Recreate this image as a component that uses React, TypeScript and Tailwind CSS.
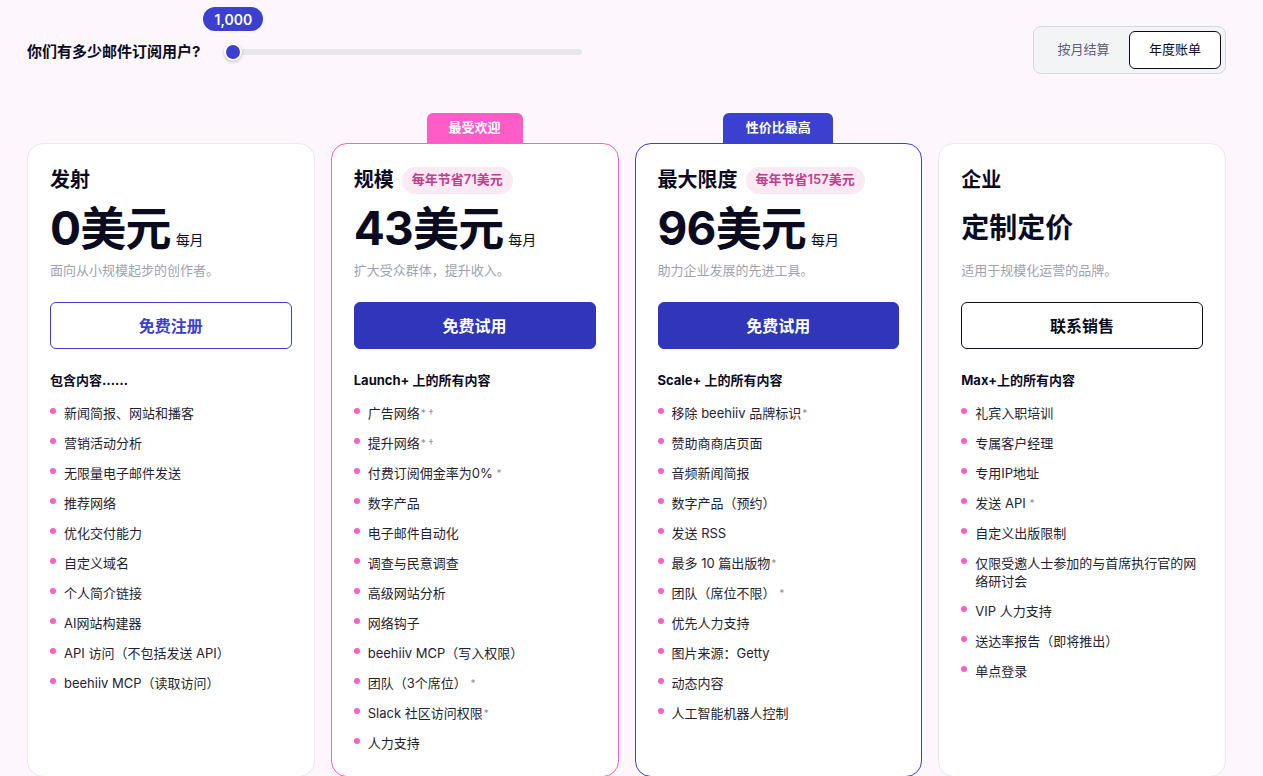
import React from "react";

type Item = { t: string; mark?: string };
type Plan = {
  name: string;
  pill?: string;
  price?: string;
  custom?: string;
  desc: string;
  cta: string;
  ctaStyle: "outline-blue" | "solid" | "outline-black";
  heading: string;
  items: Item[];
  badge?: { text: string; cls: string };
  border: string;
};

const plans: Plan[] = [
  {
    name: "发射",
    price: "0美元",
    desc: "面向从小规模起步的创作者。",
    cta: "免费注册",
    ctaStyle: "outline-blue",
    heading: "包含内容……",
    border: "border-[#ebe6ef]",
    items: [
      { t: "新闻简报、网站和播客" },
      { t: "营销活动分析" },
      { t: "无限量电子邮件发送" },
      { t: "推荐网络" },
      { t: "优化交付能力" },
      { t: "自定义域名" },
      { t: "个人简介链接" },
      { t: "AI网站构建器" },
      { t: "API 访问（不包括发送 API）" },
      { t: "beehiiv MCP（读取访问）" },
    ],
  },
  {
    name: "规模",
    pill: "每年节省71美元",
    price: "43美元",
    desc: "扩大受众群体，提升收入。",
    cta: "免费试用",
    ctaStyle: "solid",
    heading: "Launch+ 上的所有内容",
    border: "border-[#ff5fc8]",
    badge: { text: "最受欢迎", cls: "bg-[#ff5cc8] w-[96px]" },
    items: [
      { t: "广告网络", mark: "* †" },
      { t: "提升网络", mark: "* †" },
      { t: "付费订阅佣金率为0%", mark: " *" },
      { t: "数字产品" },
      { t: "电子邮件自动化" },
      { t: "调查与民意调查" },
      { t: "高级网站分析" },
      { t: "网络钩子" },
      { t: "beehiiv MCP（写入权限）" },
      { t: "团队（3个席位）", mark: " *" },
      { t: "Slack 社区访问权限", mark: "*" },
      { t: "人力支持" },
    ],
  },
  {
    name: "最大限度",
    pill: "每年节省157美元",
    price: "96美元",
    desc: "助力企业发展的先进工具。",
    cta: "免费试用",
    ctaStyle: "solid",
    heading: "Scale+ 上的所有内容",
    border: "border-[#3b40d0]",
    badge: { text: "性价比最高", cls: "bg-[#3b40d0] w-[110px]" },
    items: [
      { t: "移除 beehiiv 品牌标识", mark: "*" },
      { t: "赞助商商店页面" },
      { t: "音频新闻简报" },
      { t: "数字产品（预约）" },
      { t: "发送 RSS" },
      { t: "最多 10 篇出版物", mark: "*" },
      { t: "团队（席位不限）", mark: " *" },
      { t: "优先人力支持" },
      { t: "图片来源：Getty" },
      { t: "动态内容" },
      { t: "人工智能机器人控制" },
    ],
  },
  {
    name: "企业",
    custom: "定制定价",
    desc: "适用于规模化运营的品牌。",
    cta: "联系销售",
    ctaStyle: "outline-black",
    heading: "Max+上的所有内容",
    border: "border-[#ebe6ef]",
    items: [
      { t: "礼宾入职培训" },
      { t: "专属客户经理" },
      { t: "专用IP地址" },
      { t: "发送 API", mark: " *" },
      { t: "自定义出版限制" },
      { t: "仅限受邀人士参加的与首席执行官的网络研讨会" },
      { t: "VIP 人力支持" },
      { t: "送达率报告（即将推出）" },
      { t: "单点登录" },
    ],
  },
];

const font = {
  fontFamily: '"Inter", "Noto Sans CJK SC", sans-serif',
};

function Card({ p }: { p: Plan }) {
  const ctaCls =
    p.ctaStyle === "solid"
      ? "bg-[#3036b9] text-white border border-[#3036b9]"
      : p.ctaStyle === "outline-blue"
      ? "bg-white text-[#3b40d0] border border-[#3b40d0]"
      : "bg-white text-[#0b0b1f] border border-[#0b0b1f]";
  return (
    <div className="flex flex-col">
      <div className="h-[30px] flex justify-center items-end">
        {p.badge && (
          <div
            className={`${p.badge.cls} h-[30px] rounded-t-[6px] flex items-center justify-center text-white text-[13px] font-bold`}
          >
            {p.badge.text}
          </div>
        )}
      </div>
      <div
        className={`h-[634px] bg-white border ${p.border} rounded-[16px] px-[22px] pt-[22px]`}
      >
        <div className="h-[28px] flex items-center gap-[8px]">
          <div className="text-[20px] font-bold text-[#0b0b1f] leading-none">
            {p.name}
          </div>
          {p.pill && (
            <div className="h-[27px] px-[10px] rounded-full bg-[#fbe9f4] text-[#c23d90] text-[13px] font-semibold flex items-center">
              {p.pill}
            </div>
          )}
        </div>
        <div className="mt-[11px] h-[46px] flex items-end">
          {p.price ? (
            <>
              <span className="text-[46px] font-bold text-[#0b0b1f] leading-none tracking-[-0.8px]">
                {p.price}
              </span>
              <span className="text-[14px] text-[#0b0b1f] ml-[5px] mb-[4px] leading-none">
                每月
              </span>
            </>
          ) : (
            <span className="text-[28px] font-bold text-[#0b0b1f] leading-none self-center">
              {p.custom}
            </span>
          )}
        </div>
        <div className="mt-[9px] text-[13px] leading-5 text-[#9ca3af]">
          {p.desc}
        </div>
        <button
          className={`mt-[22px] w-full h-[47px] rounded-[6px] text-[16px] font-bold ${ctaCls}`}
        >
          {p.cta}
        </button>
        <div className="mt-[22px] text-[13px] font-bold leading-[18px] text-[#0b0b1f]">
          {p.heading}
        </div>
        <ul className="mt-[15px] flex flex-col gap-[12px]">
          {p.items.map((it, i) => (
            <li key={i} className="flex items-start gap-[8px]">
              <span className="mt-[4px] w-[6px] h-[6px] rounded-full bg-[#ff5fc8] shrink-0" />
              <span className="text-[13px] leading-[18px] text-[#1f2333] pr-[6px]">
                {it.t}
                {it.mark && (
                  <span className="text-[10px] text-[#8a8fa3] align-top ml-[1px] whitespace-pre">
                    {it.mark}
                  </span>
                )}
              </span>
            </li>
          ))}
        </ul>
      </div>
    </div>
  );
}

export default function App() {
  return (
    <div
      className="min-h-screen bg-[#fdf6fd] pl-[27px] overflow-hidden"
      style={font}
    >
      <div className="w-[1199px]">
        <div className="pt-[26px] flex items-center justify-between">
          <div className="flex items-center pt-[4px]">
            <div className="text-[15px] font-bold text-[#0b0b1f]">
              你们有多少邮件订阅用户?
            </div>
            <div className="relative ml-[24px] w-[358px] h-[20px] flex items-center">
              <div className="w-full h-[6px] rounded-full bg-[#e5e7eb]" />
              <div className="absolute left-0 top-[1px] w-[18px] h-[18px] rounded-full bg-[#3b40d0] border-2 border-white shadow-[0_1px_3px_rgba(0,0,0,0.25)]" />
              <div className="absolute left-[-21px] top-[-35px] w-[60px] h-[24px] rounded-full bg-[#3b40d0] text-white text-[14px] font-semibold flex items-center justify-center">
                1,000
              </div>
            </div>
          </div>
          <div className="w-[193px] h-[48px] rounded-[8px] bg-[#f3f4f6] border border-[#d6d8dd] p-[4px] flex items-center">
            <div className="flex-1 h-full flex items-center justify-center text-[13px] text-[#5b6070]">
              按月结算
            </div>
            <div className="w-[92px] h-full rounded-[6px] bg-white border border-[#0b0b1f] flex items-center justify-center text-[13px] text-[#0b0b1f]">
              年度账单
            </div>
          </div>
        </div>
        <div className="mt-[39px] grid grid-cols-4 gap-4">
          {plans.map((p, i) => (
            <Card key={i} p={p} />
          ))}
        </div>
      </div>
    </div>
  );
}
